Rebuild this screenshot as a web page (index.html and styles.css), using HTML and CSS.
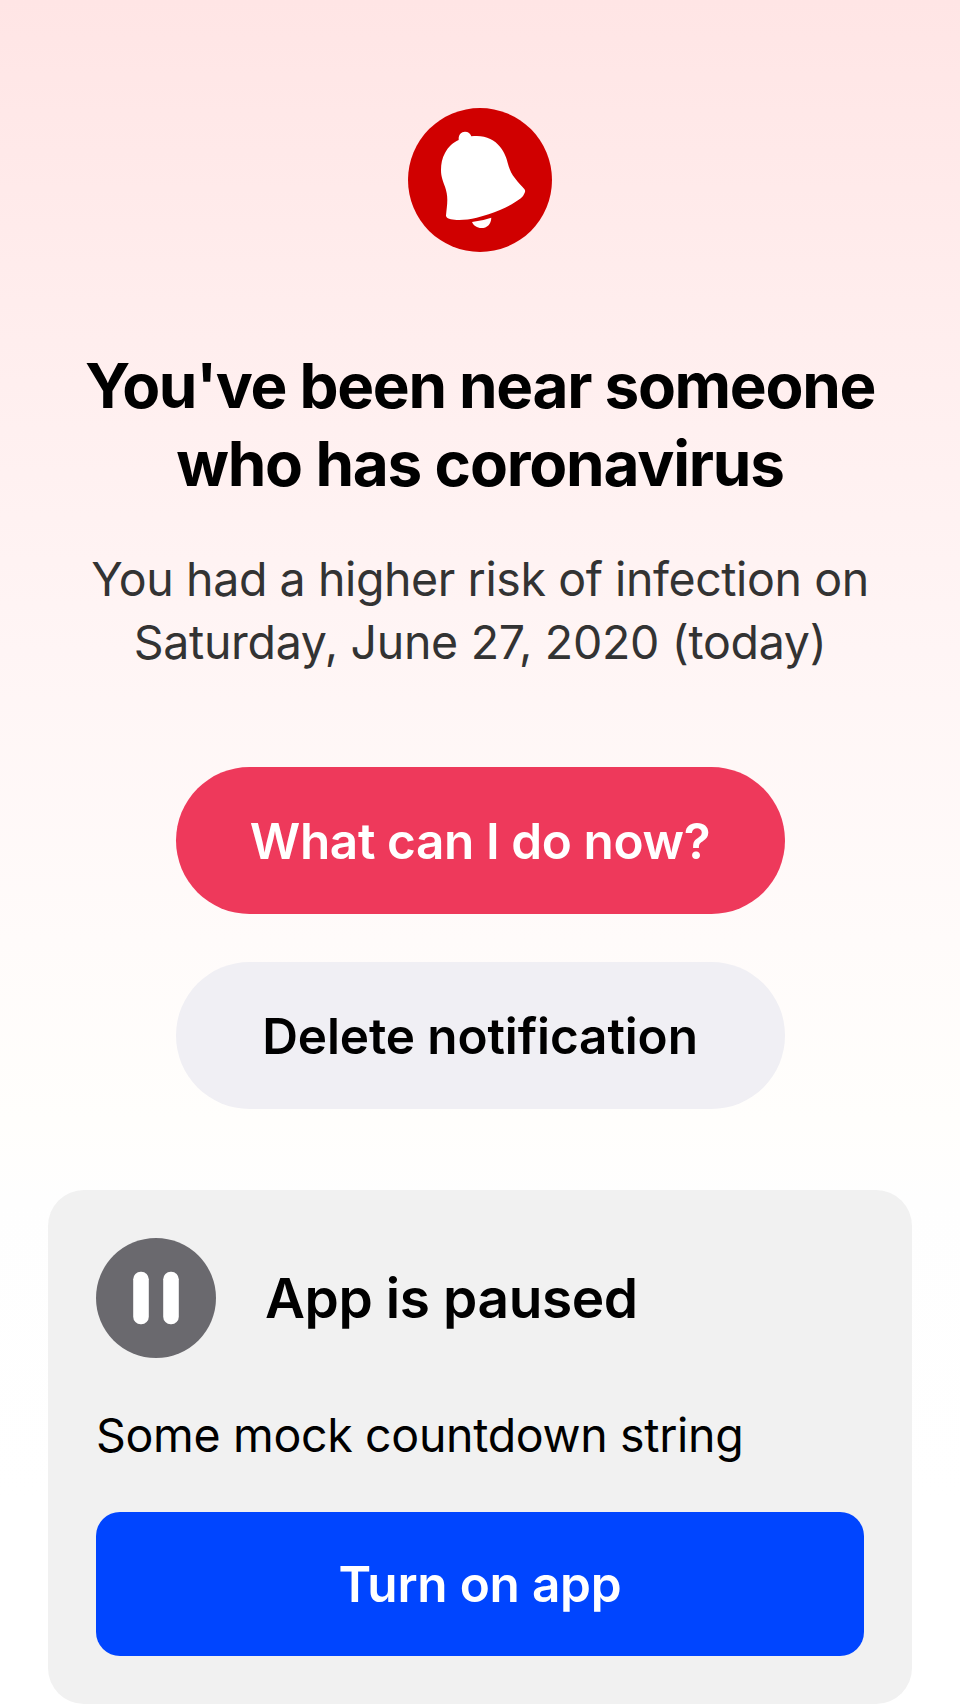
FILE: index.html
```
<!DOCTYPE html>
<html lang="en">
<head>
<meta charset="utf-8">
<title>Exposure notification</title>
<link rel="stylesheet" href="styles.css">
</head>
<body>
<main class="screen">
  <svg class="bell" viewBox="0 0 144 144" aria-hidden="true">
    <circle cx="72" cy="72" r="72" fill="#d00000"/>
    <path fill="#fff" d="M50.700 32C50.300 27 53 23.700 57 23.700C60.200 23.700 62.500 25.500 63.300 28.300C76 26.500 86 31 92 38.700C97 45 98.500 50 100.300 57C102 63 104 66.500 107 70.300C110 74.500 113.500 78 116.300 81C117.300 82 117.300 83.500 116.800 84.500C115.800 87 114.500 89 112.500 90.500C106.500 95 99.500 99 92 102C84.500 105.300 77 107.700 68.700 109.700C61.500 111.300 55 112.200 48.700 111.900C43 111.800 38 110.500 38 107.500C38.500 102 39.300 97 39.300 92C39.300 87 38.500 83 37 78.700C35 73 33 69 33 62C33 56 34 50 37 45C40.500 38.500 45 34.500 50.700 32Z"/>
    <path fill="#fff" d="M64 114Q74 113 83.300 109.700C83 116.500 79 120 73.500 120C69 120 65.500 117.500 64 114Z"/>
  </svg>
  <h1 class="title"><span class="title-a">You've been near someone</span><br><span class="title-b">who has coronavirus</span></h1>
  <p class="message"><span class="message-a">You had a higher risk of infection on</span><br><span class="message-b">Saturday, June 27, 2020 (today)</span></p>
  <div class="actions">
    <button class="pill primary">What can I do now?</button>
    <button class="pill secondary">Delete notification</button>
  </div>
  <section class="card">
    <div class="card-head">
      <svg class="pause" viewBox="0 0 120 120" aria-hidden="true">
        <circle cx="60" cy="60" r="60" fill="#6a696e"/>
        <rect x="37.200" y="33.800" width="15.600" height="52.400" rx="7.500" fill="#fff"/>
        <rect x="67.200" y="33.800" width="15.600" height="52.400" rx="7.500" fill="#fff"/>
      </svg>
      <h2 class="card-title">App is paused</h2>
    </div>
    <p class="countdown">Some mock countdown string</p>
    <button class="turn-on">Turn on app</button>
  </section>
</main>
</body>
</html>
```
FILE: styles.css
```
* { box-sizing: border-box; }
body { margin: 0; font-family: Inter, "Liberation Sans", sans-serif; color: #000; }
h1, h2, p { margin: 0; white-space: nowrap; }
button { border: 0; padding: 0; font-family: inherit; font-size: 49.5px; font-weight: 600; white-space: nowrap; }
.screen { height: 1704px; padding: 108px 48px 0; display: flex; flex-direction: column; align-items: center; overflow: hidden; background: linear-gradient(#ffe5e5 0, #ffeeee 340px, #fff5f5 650px, #fffbfa 940px, #fffefc 1120px, #fefefe 1200px, #fff 1500px); }
.bell { width: 144px; height: 144px; flex: none; }
.title { margin-top: 95px; font-size: 62px; line-height: 78px; font-weight: 700; text-align: center; }
.title-a { letter-spacing: -1.33px; }
.title-b { letter-spacing: -1.2px; }
.message { margin-top: 45px; font-size: 46.5px; line-height: 63px; text-align: center; color: #333; }
.message-a { letter-spacing: -0.41px; }
.message-b { letter-spacing: -0.3px; }
.actions { margin-top: 93px; display: flex; flex-direction: column; gap: 48px; }
.pill { width: 609px; height: 147px; border-radius: 74px; }
.primary { background: #ee395b; color: #fff; letter-spacing: -0.4px; }
.secondary { background: #f0eff4; color: #000; letter-spacing: -0.12px; }
.card { width: 864px; height: 514px; flex: none; margin-top: 81px; padding: 48px; border-radius: 36px; background: #f1f1f1; }
.card-head { display: flex; align-items: center; gap: 49px; }
.pause { width: 120px; height: 120px; flex: none; }
.card-title { font-size: 55px; line-height: 66px; font-weight: 600; letter-spacing: -0.42px; }
.countdown { margin-top: 47px; font-size: 46.5px; line-height: 60px; letter-spacing: -0.33px; }
.turn-on { display: block; width: 100%; height: 144px; margin-top: 47px; border-radius: 24px; background: #0045ff; color: #fff; letter-spacing: -0.22px; }
```
